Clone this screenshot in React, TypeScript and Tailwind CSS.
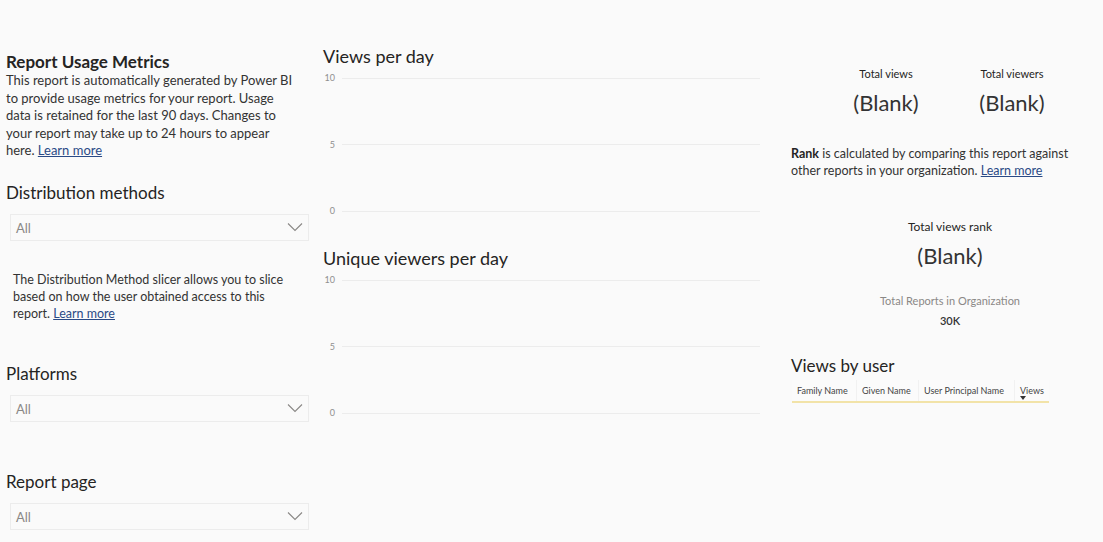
import React from 'react';

// Power BI "Report Usage Metrics" page: filters on the left, two empty line
// charts in the middle, KPI cards and the views-by-user table on the right.

const font = { fontFamily: '"Segoe UI", Lato, "Noto Sans", sans-serif' };

function LearnMore() {
  return <span className="text-[#2a4a86] underline">Learn more</span>;
}

function Chevron() {
  return (
    <svg width="16" height="10" viewBox="0 0 16 10" fill="none">
      <path d="M1 1.5 L8 8.5 L15 1.5" stroke="#8a8886" strokeWidth="1.1" />
    </svg>
  );
}

function Slicer({ title, top }: { title: string; top: string }) {
  return (
    <div className={top}>
      <div className="text-[17px] leading-[22px] text-[#252423]">{title}</div>
      <div className="ml-[4px] mt-[10px] flex h-[27px] w-[299px] items-center justify-between border border-[#ececec] bg-[#fafafa] pl-[5px] pr-[5px]">
        <span className="pt-[3px] text-[13px] text-[#8a8886]">All</span>
        <Chevron />
      </div>
    </div>
  );
}

function EmptyChart({ title, top }: { title: string; top: string }) {
  return (
    <div className={top}>
      <div className="text-[18px] leading-[22px] text-[#252423]">{title}</div>
      <div className="mt-[5px] flex h-[145px] flex-col justify-between">
        {['10', '5', '0'].map((v) => (
          <div key={v} className="flex h-[12px] items-center">
            <span className="w-[19px] pr-[7px] text-right text-[9px] text-[#8f8f8f]">{v}</span>
            <div className="h-px flex-1 bg-[#ececec]" />
          </div>
        ))}
      </div>
    </div>
  );
}

function Kpi({ label, value }: { label: string; value: string }) {
  return (
    <div className="flex w-[126px] flex-col items-center">
      <div className="text-[11px] leading-[14px] text-[#252423]">{label}</div>
      <div className="mt-[8px] text-[22px] leading-[28px] text-[#333]">{value}</div>
    </div>
  );
}

export default function App() {
  const cols = [
    { name: 'Family Name', w: 'w-[65px]' },
    { name: 'Given Name', w: 'w-[62px]' },
    { name: 'User Principal Name', w: 'w-[96px]' },
    { name: 'Views', w: 'w-[34px]' },
  ];

  return (
    <div className="flex h-[542px] w-[1103px] overflow-hidden bg-[#fafafa]" style={font}>
      {/* left: intro + slicers */}
      <div className="w-[323px] shrink-0 pl-[6px] pt-[52px]">
        <div className="text-[17px] font-bold leading-[20px] text-[#252423]">Report Usage Metrics</div>
        <p className="w-[290px] text-[13px] leading-[17.5px] text-[#333]">
          This report is automatically generated by Power BI to provide usage metrics for your report. Usage
          data is retained for the last 90 days. Changes to your report may take up to 24 hours to appear
          here. <LearnMore />
        </p>
        <Slicer title="Distribution methods" top="mt-[22px]" />
        <p className="ml-[7px] mt-[30px] w-[285px] text-[12.5px] leading-[17px] text-[#333]">
          The Distribution Method slicer allows you to slice based on how the user obtained access to this
          report. <LearnMore />
        </p>
        <Slicer title="Platforms" top="mt-[41px]" />
        <Slicer title="Report page" top="mt-[49px]" />
      </div>

      {/* middle: charts */}
      <div className="w-[437px] shrink-0 pt-[45px]">
        <EmptyChart title="Views per day" top="" />
        <EmptyChart title="Unique viewers per day" top="mt-[30px]" />
      </div>

      {/* right: cards + table */}
      <div className="ml-[31px] w-[312px] shrink-0 pt-[67px]">
        <div className="ml-[32px] flex">
          <Kpi label="Total views" value="(Blank)" />
          <Kpi label="Total viewers" value="(Blank)" />
        </div>
        <p className="mt-[28px] w-[300px] text-[12.5px] leading-[17px] text-[#333]">
          <span className="font-bold text-[#252423]">Rank</span> is calculated by comparing this report against
          <br />
          other reports in your organization. <LearnMore />
        </p>
        <div className="flex w-[318px] flex-col items-center">
          <div className="mt-[41px] text-[12px] leading-[14px] text-[#252423]">Total views rank</div>
          <div className="mt-[8px] text-[22px] leading-[28px] text-[#333]">(Blank)</div>
          <div className="mt-[24px] text-[11px] leading-[14px] text-[#8a8886]">Total Reports in Organization</div>
          <div className="mt-[6px] text-[11px] font-semibold leading-[14px] text-[#333]">30K</div>
        </div>
        <div className="mt-[27px] text-[17px] leading-[22px] text-[#252423]">Views by user</div>
        <div className="ml-px mt-[3px] flex h-[23px] w-[257px] border-b-2 border-[#f2e3a8] bg-[#fbfbfb]">
          {cols.map((c, i) => (
            <div
              key={c.name}
              className={`${c.w} relative flex items-center whitespace-nowrap px-[5px] text-[9px] text-[#444] ${
                i < cols.length - 1 ? 'border-r border-[#f1f1f1]' : ''
              }`}
            >
              {c.name}
              {c.name === 'Views' && (
                <svg className="absolute bottom-[1px] left-[5px]" width="6" height="4" viewBox="0 0 6 4">
                  <path d="M0 0 L6 0 L3 4 Z" fill="#333" />
                </svg>
              )}
            </div>
          ))}
        </div>
      </div>
    </div>
  );
}
